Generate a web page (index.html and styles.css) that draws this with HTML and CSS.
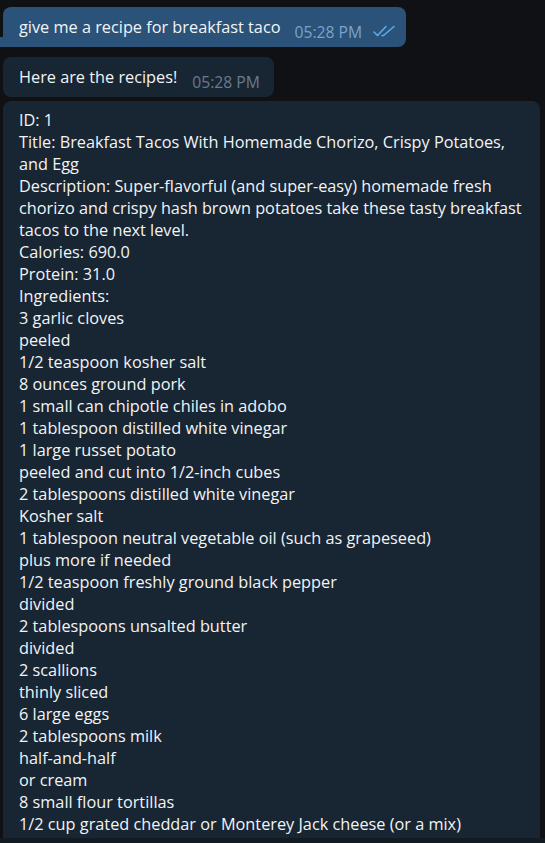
FILE: index.html
```html
<!DOCTYPE html>
<html>
<head>
<meta charset="utf-8">
<link rel="stylesheet" href="styles.css">
</head>
<body>
<div class="chat">
  <div class="bubble out">
    <svg class="tail" width="8" height="10" viewBox="0 0 8 10"><path d="M8 0 V10 H0 C3 9 5 6 5 0 Z" fill="#2b5278"/></svg>
    <span class="msg">give me a recipe for breakfast taco</span>
    <span class="time out-time">05:28 PM</span>
    <svg class="checks" width="23" height="12" viewBox="0 0 23 12"><path d="M1 7 L4.5 10.5 L13 1.5 M9 10.5 L10.5 10.5 L21 1.5" fill="none" stroke="#5ea9ea" stroke-width="1.6" stroke-linecap="round" stroke-linejoin="round"/></svg>
  </div>
  <div class="bubble in">
    <span class="msg">Here are the recipes!</span>
    <span class="time in-time">05:28 PM</span>
  </div>
  <div class="bubble in big">
    <div class="text">ID: 1<br>Title: Breakfast Tacos With Homemade Chorizo, Crispy Potatoes, and Egg<br>Description: Super-flavorful (and super-easy) homemade fresh chorizo and crispy hash brown potatoes take these tasty breakfast tacos to the next level.<br>Calories: 690.0<br>Protein: 31.0<br>Ingredients:<br>3 garlic cloves<br>peeled<br>1/2 teaspoon kosher salt<br>8 ounces ground pork<br>1 small can chipotle chiles in adobo<br>1 tablespoon distilled white vinegar<br>1 large russet potato<br>peeled and cut into 1/2-inch cubes<br>2 tablespoons distilled white vinegar<br>Kosher salt<br>1 tablespoon neutral vegetable oil (such as grapeseed)<br>plus more if needed<br>1/2 teaspoon freshly ground black pepper<br>divided<br>2 tablespoons unsalted butter<br>divided<br>2 scallions<br>thinly sliced<br>6 large eggs<br>2 tablespoons milk<br>half-and-half<br>or cream<br>8 small flour tortillas<br>1/2 cup grated cheddar or Monterey Jack cheese (or a mix)</div>
  </div>
</div>
<div class="bottom-strip"></div>
</body>
</html>
```
FILE: styles.css
```css
html, body {
  margin: 0;
  padding: 0;
  height: 843px;
  overflow: hidden;
  background: #0f1114;
}
body {
  display: flex;
  flex-direction: column;
  font-family: "Open Sans", "DejaVu Sans", sans-serif;
  color: #f2f4f6;
  font-size: 16.3px;
  line-height: 22px;
}
.chat {
  flex: 1;
  min-height: 0;
  overflow: hidden;
  display: flex;
  flex-direction: column;
  align-items: flex-start;
  padding: 7px 5px 0 3px;
}
.bottom-strip {
  height: 5px;
  flex: none;
  background: #121a22;
}
.bubble {
  position: relative;
  display: flex;
  align-items: flex-end;
  padding: 9px 12px 9px 16px;
  border-radius: 8px;
  box-sizing: border-box;
}
.out {
  background: #2b5278;
  border-bottom-left-radius: 0;
  padding-right: 10px;
}
.out .msg {
  margin-right: -1px;
}
.tail {
  position: absolute;
  left: -3px;
  bottom: 0;
  transform: scaleX(-1);
}
.in {
  background: #182533;
  margin-top: 10px;
  padding-right: 14px;
}
.big {
  margin-top: 4px;
  width: 537px;
  flex: 1;
  padding: 8px 16px 0 16px;
  border-radius: 8px 8px 0 0;
  align-items: flex-start;
}
.time {
  font-size: 15.7px;
  line-height: 18px;
  margin-left: 15px;
  margin-bottom: -3px;
  white-space: nowrap;
}
.out-time {
  color: #7aa3cb;
}
.in-time {
  color: #6a7b8c;
}
.checks {
  margin-left: 11px;
  margin-bottom: 1px;
}
.msg {
  white-space: nowrap;
}
```
